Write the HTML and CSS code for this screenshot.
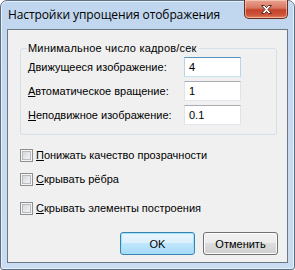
FILE: index.html
```html
<!DOCTYPE html>
<html lang="ru">
<head>
<meta charset="utf-8">
<title>Настройки упрощения отображения</title>
<link rel="stylesheet" href="styles.css">
</head>
<body>
<div class="window">
  <div class="titlebar">
    <span class="title">Настройки упрощения отображения</span>
    <button class="close" aria-label="Закрыть">
      <svg width="17" height="11" viewBox="0 0 17 11">
        <path d="M3.5 1.5 L6.5 1.5 L8.5 3.6 L10.5 1.5 L13.5 1.5 L10 5.5 L13.5 9.5 L10.5 9.5 L8.5 7.4 L6.5 9.5 L3.5 9.5 L7 5.5 Z" fill="#fff" stroke="#5a2a22" stroke-width="1" stroke-linejoin="round"/>
      </svg>
    </button>
  </div>
  <div class="client">
    <fieldset class="group">
      <legend>Минимальное число кадров/сек</legend>
      <div class="row">
        <label><u>Д</u>вижущееся изображение:</label>
        <span class="input focus">4</span>
      </div>
      <div class="row">
        <label><u>А</u>втоматическое вращение:</label>
        <span class="input">1</span>
      </div>
      <div class="row">
        <label><u>Н</u>еподвижное изображение:</label>
        <span class="input">0.1</span>
      </div>
    </fieldset>
    <div class="checks">
      <div class="check c1"><span class="box"></span><span><u>П</u>онижать качество прозрачности</span></div>
      <div class="check c2"><span class="box"></span><span><u>С</u>крывать рёбра</span></div>
      <div class="check c3"><span class="box"></span><span><u>С</u>крывать элементы построения</span></div>
    </div>
    <div class="buttons">
      <button class="btn default">OK</button>
      <button class="btn">Отменить</button>
    </div>
  </div>
</div>
</body>
</html>
```
FILE: styles.css
```css
html, body { margin: 0; padding: 0; background: #ffffff; }
body { width: 295px; height: 270px; overflow: hidden; }

.window {
  box-sizing: border-box;
  width: 295px;
  height: 270px;
  border: 1px solid #5f6f82;
  border-radius: 7px 7px 3px 3px;
  background: linear-gradient(to bottom, #c0d6ee 0%, #c6dbf1 40%, #c9dcf1 100%);
  box-shadow: inset 0 0 0 1px #e6f0fb;
  display: flex;
  flex-direction: column;
}

.titlebar {
  height: 28px;
  display: flex;
  align-items: flex-start;
  justify-content: space-between;
}
.title {
  font-family: "Open Sans", "Noto Sans", sans-serif;
  font-size: 12px;
  color: #000;
  padding: 5px 0 0 7px;
  letter-spacing: -0.1px;
}
.close {
  width: 44px;
  height: 19px;
  margin: -1px 6px 0 0;
  padding: 0;
  border: 1px solid #6b2c24;
  border-top: none;
  border-radius: 0 0 5px 5px;
  background: linear-gradient(to bottom, #e8a493 0%, #d9755f 45%, #c3432a 55%, #d0563b 85%, #e58a66 100%);
  box-shadow: inset 0 0 0 1px rgba(255,220,200,0.55);
  display: flex;
  align-items: center;
  justify-content: center;
}

.client {
  flex: 1;
  margin: 0 6px 6px 6px;
  border: 1px solid #6a7888;
  background: #f0f0f0;
  font-family: "Liberation Sans", Arial, sans-serif;
  font-size: 11px;
  color: #000;
  padding: 12px 10px 0 12px;
  display: flex;
  flex-direction: column;
}

.group {
  margin: 0;
  border: 1px solid #d5dfe5;
  border-radius: 3px;
  padding: 3px 0 9px 7px;
  height: 93px;
  box-sizing: border-box;
}
.group legend {
  padding: 0 2px 0 1px;
  margin-left: -1px;
  font-size: 11px;
  letter-spacing: 0.2px;
  white-space: nowrap;
}
.row {
  display: flex;
  align-items: center;
  height: 20px;
  margin-bottom: 4px;
}
.row label { flex: none; width: 156px; white-space: nowrap; }
.input {
  box-sizing: border-box;
  flex: none;
  width: 57px;
  height: 20px;
  border: 1px solid;
  border-color: #abadb3 #e2e3ea #e3e9ef #e2e3ea;
  background: #fff;
  padding: 2px 0 0 4px;
  line-height: 15px;
}
.input.focus { border-color: #5794bf #b7d5ea #c7e2f1 #b7d5ea; }

.checks { display: flex; flex-direction: column; padding-top: 13px; }
.check {
  display: flex;
  align-items: center;
  gap: 3px;
  height: 14px;
  white-space: nowrap;
}
.c2 { margin-top: 10px; }
.c3 { margin-top: 15px; }
.box {
  box-sizing: border-box;
  flex: none;
  width: 13px;
  height: 13px;
  border: 1px solid #8e8f8f;
  background: linear-gradient(135deg, #cdd0d4 0%, #eeeff0 70%, #f8f8f8 100%);
  box-shadow: inset 0 0 0 1px #f4f4f4, inset 0 0 0 2px #b8bcc2;
}

.buttons {
  display: flex;
  justify-content: flex-end;
  gap: 8px;
  margin-top: 17px;
  margin-right: -1px;
}
.btn {
  box-sizing: border-box;
  width: 75px;
  height: 23px;
  font-family: "Liberation Sans", Arial, sans-serif;
  font-size: 11px;
  color: #000;
  border: 1px solid #707070;
  border-radius: 3px;
  background: linear-gradient(to bottom, #f2f2f2 0%, #ebebeb 49%, #dddddd 50%, #cfcfcf 100%);
  box-shadow: inset 0 0 0 1px #fcfcfc;
  padding: 0;
}
.btn.default {
  border-color: #3c7fb1;
  background: linear-gradient(to bottom, #eaf6fd 0%, #d9f0fc 49%, #bee6fd 50%, #a7d9f5 100%);
  box-shadow: inset 0 0 0 1px #9ee3fa;
}
```
